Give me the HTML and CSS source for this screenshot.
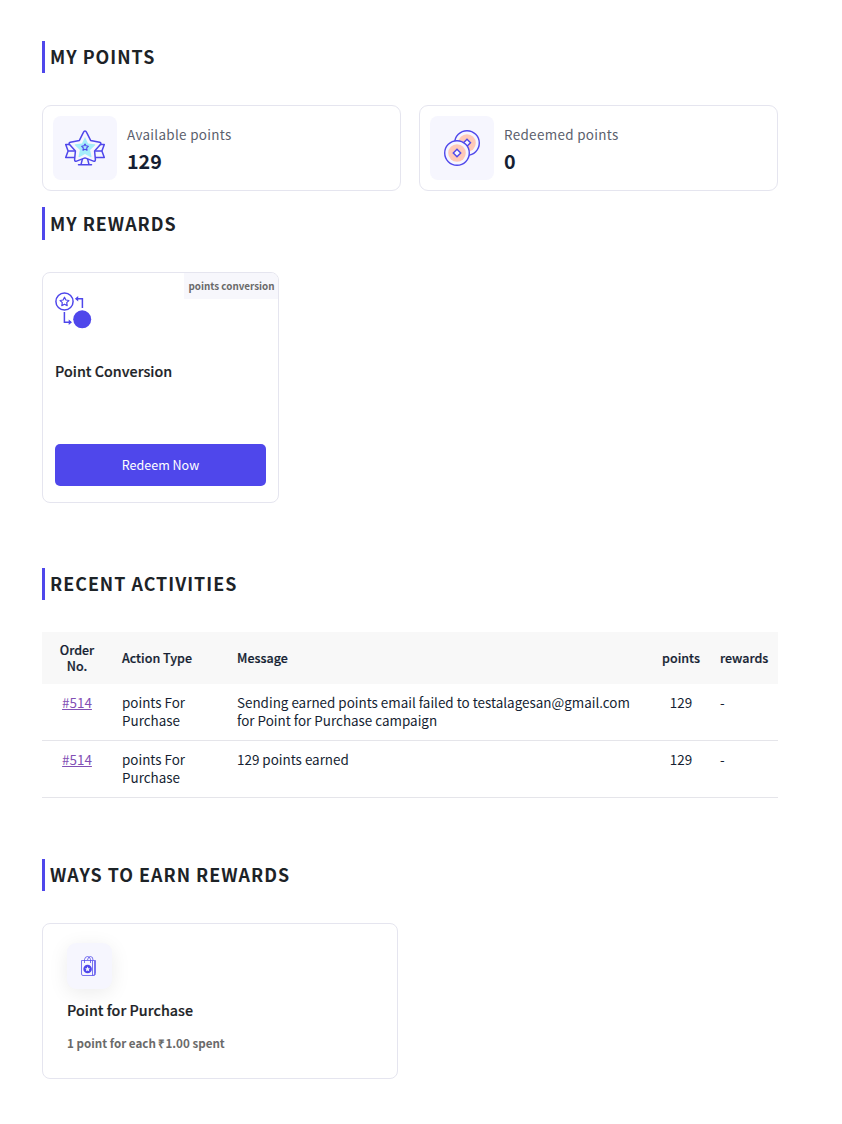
FILE: index.html
```html
<!DOCTYPE html>
<html lang="en">
<head>
<meta charset="utf-8">
<title>My Points</title>
<link rel="stylesheet" href="styles.css">
</head>
<body>
<main class="page">
  <section class="points">
    <h2 class="heading">MY POINTS</h2>
    <div class="stats">
      <div class="stat">
        <div class="stat-icon">
          <svg width="42" height="38" viewBox="0 -0.600 42 38" fill="none" stroke="#4f47eb" stroke-width="1.500" stroke-linejoin="round" stroke-linecap="round">
            <path d="M8 15H1.700l2.400 6.500L1.700 28H11M34 15h6.300l-2.400 6.500 2.400 6.500H31M4.100 21.500h6.400M37.900 21.500h-6.400"/>
            <path d="M18.500 29l-1.500 6M23.500 29l1.500 6M14.500 35.200h13"/>
            <path fill="#f6f6fe" d="M21 1.500q1 0 1.600 1.300l4 8 9 1.900q2.200.7.8 2.300l-5.800 6.500.8 8.500q0 2.300-2 1.500L21 28.300l-8.400 3.200q-2 .8-2-1.500l.8-8.500L5.600 15q-1.400-1.600.8-2.300l9-1.900 4-8Q20 1.500 21 1.500z"/>
            <path fill="#a5edfa" stroke="none" d="M21 7.300l3 6.500 6.800.9q1 .3.300 1l-5 4.600 1.400 6.600q0 1-.8.700L21 24.500l-5.700 3.100q-.8.300-.8-.700l1.400-6.600-5-4.600q-.7-.7.300-1l6.800-.9z"/>
            <path stroke-width="1.100" d="M21 14.400l1 1.800 2.300.5-1.600 1.600.3 2.300-2-.9-2 .9.300-2.300-1.600-1.600 2.300-.5z"/>
          </svg>
        </div>
        <div class="stat-text"><span class="stat-label">Available points</span><span class="stat-value">129</span></div>
      </div>
      <div class="stat">
        <div class="stat-icon">
          <svg width="38" height="38" viewBox="0 0 38 38" fill="#f6f6fe" stroke="#4f47eb" stroke-width="1.400">
            <circle cx="24" cy="14" r="12.300"/>
            <circle cx="24" cy="14" r="8.800" fill="#ffc9b8" stroke="none"/>
            <path d="M24 10.300l3.500 3.500-3.500 3.500-3.500-3.500z"/>
            <circle cx="14" cy="24" r="12.300"/>
            <circle cx="14" cy="24" r="8.800" fill="#ffc9b8" stroke="none"/>
            <path d="M14 20.300l3.700 3.700-3.700 3.700-3.700-3.700z"/>
          </svg>
        </div>
        <div class="stat-text"><span class="stat-label">Redeemed points</span><span class="stat-value">0</span></div>
      </div>
    </div>
  </section>

  <section class="rewards">
    <h2 class="heading heading-tall">MY REWARDS</h2>
    <div class="reward">
      <span class="tag">points conversion</span>
      <svg class="reward-icon" width="38" height="38" viewBox="0 0 38 38" fill="none" stroke="#4f47eb" stroke-width="1.500">
        <circle cx="9.500" cy="9.500" r="8.600"/>
        <path stroke-width="1.200" stroke-linejoin="round" d="M9.500 5.200l1.400 2.800 3 .5-2.200 2.100.5 3-2.700-1.400-2.700 1.400.5-3-2.200-2.100 3-.5z"/>
        <path d="M27.400 16V6.700H21M9.400 20v10.200H16"/>
        <path fill="#4f47eb" stroke="none" d="M23.200 4v5.400l-3.300-2.700zM13.700 27.500v5.400l3.300-2.700z"/>
        <circle cx="27.200" cy="27.300" r="9" fill="#4f47eb" stroke="none"/>
      </svg>
      <h3 class="reward-title">Point Conversion</h3>
      <button class="redeem" type="button">Redeem Now</button>
    </div>
  </section>

  <section class="activities">
    <h2 class="heading">RECENT ACTIVITIES</h2>
    <table class="table">
      <colgroup><col class="c-order"><col class="c-type"><col class="c-msg"><col class="c-points"><col class="c-rewards"></colgroup>
      <thead>
        <tr><th class="center">Order<br>No.</th><th>Action Type</th><th>Message</th><th class="center">points</th><th>rewards</th></tr>
      </thead>
      <tbody>
        <tr><td class="center"><a class="order" href="#">#514</a></td><td>points For<br>Purchase</td><td>Sending earned points email failed to testalagesan@gmail.com<br>for Point for Purchase campaign</td><td class="center">129</td><td>-</td></tr>
        <tr><td class="center"><a class="order" href="#">#514</a></td><td>points For<br>Purchase</td><td>129 points earned</td><td class="center">129</td><td>-</td></tr>
      </tbody>
    </table>
  </section>

  <section class="ways">
    <h2 class="heading">WAYS TO EARN REWARDS</h2>
    <div class="way">
      <div class="way-icon">
        <svg width="18" height="22" viewBox="0 0 18 22" fill="none" stroke="#4f47eb" stroke-width="1">
          <path stroke-opacity=".75" d="M2.500 5.500h13v13.500q0 1.500-1.500 1.500H4q-1.500 0-1.500-1.500zM13.500 5.500v15M15.500 5.500h1v13q0 2-2 2M5.500 8V4.500Q6 1.500 8.500 1.500T11.500 4.500V8M8.500 5Q9 1.500 11.500 1.500T14 5"/>
          <circle cx="8.600" cy="14" r="4.300" fill="#4f47eb" stroke="none"/>
          <path fill="#f6f6fe" stroke="none" d="M8.600 11.600l.8 1.600 1.700.2-1.200 1.200.3 1.700-1.600-.8-1.600.8.300-1.700-1.200-1.200 1.700-.2z"/>
        </svg>
      </div>
      <h3 class="way-title">Point for Purchase</h3>
      <p class="way-text">1 point for each ₹1.00 spent</p>
    </div>
  </section>
</main>
</body>
</html>
```
FILE: styles.css
```css
* { box-sizing: border-box; }
body { margin: 0; background: #fff; color: #1d2327; font-family: "Noto Sans CJK SC", "Open Sans", sans-serif; }
h2, h3, p { margin: 0; }
svg { display: block; }
.page { width: 778px; padding: 41px 0 0 42px; white-space: nowrap; }
.heading { height: 32px; border-left: 3px solid #4f47eb; padding-left: 5px; font-size: 17.87px; line-height: 30px; font-weight: 700; letter-spacing: 1px; margin-bottom: 32px; }
.heading-tall { height: 33px; line-height: 33px; }
.stats { display: grid; grid-template-columns: 359px 359px; gap: 18px; }
.stat { height: 86px; border: 1px solid #e5e5ef; border-radius: 9px; padding: 10px; display: flex; gap: 10px; }
.stat-icon { width: 64px; height: 64px; border-radius: 8px; background: #f6f6fe; display: flex; align-items: center; justify-content: center; }
.stat-text { display: flex; flex-direction: column; padding-top: 4px; }
.stat-label { font-size: 13.43px; line-height: 29px; letter-spacing: .33px; color: #5b5f6d; }
.stat-value { font-size: 19.7px; line-height: 23px; font-weight: 700; color: #161f33; }
.rewards { margin-top: 16px; }
.reward { position: relative; width: 237px; height: 231px; border: 1px solid #e5e5ef; border-radius: 8px; padding: 19px 12px 16px; display: flex; flex-direction: column; overflow: hidden; }
.tag { position: absolute; top: 0; right: 0; width: 94px; height: 26px; background: #f7f7fc; font-size: 9.83px; line-height: 26px; font-weight: 700; color: #6a6a6a; padding-right: 3.5px; text-align: right; }
.reward-title { margin-top: 30px; font-size: 14.3px; line-height: 22px; font-weight: 500; -webkit-text-stroke: .2px; letter-spacing: .03px; }
.redeem { margin-top: auto; height: 42px; border: 0; border-radius: 5px; background: #4f47eb; color: #fff; font: 400 12.53px/42px "Noto Sans CJK SC", sans-serif; padding: 0; }
.activities { margin-top: 65px; }
.table { width: 736px; border-collapse: separate; border-spacing: 0; table-layout: fixed; color: #161f33; }
.c-order { width: 70px; }
.c-type { width: 115px; }
.c-msg { width: 425px; }
.c-points { width: 58px; }
.c-rewards { width: 68px; }
th { height: 52px; padding: 0 10px; background: #f8f8f8; font-size: 12.53px; line-height: 16px; font-weight: 500; text-align: left; -webkit-text-stroke: .2px; }
td { height: 57px; padding: 9px 10px 0; border-bottom: 1px solid #e5e5ea; font-size: 13.43px; line-height: 18px; text-align: left; vertical-align: top; }
.center { text-align: center; }
.order { color: #8250b5; }
.ways { margin-top: 61px; }
.way { width: 356px; height: 156px; border: 1px solid #e5e5ef; border-radius: 8px; padding: 19px 24px; }
.way-icon { width: 45px; height: 46px; border-radius: 9px; background: #f6f6fe; box-shadow: 0 4px 20px rgba(0,0,0,.08); display: flex; align-items: center; justify-content: center; padding-right: 4px; }
.way-title { margin-top: 10px; font-size: 14.3px; line-height: 22px; font-weight: 500; -webkit-text-stroke: .2px; letter-spacing: .03px; }
.way-text { margin-top: 12px; font-size: 11.62px; line-height: 20px; font-weight: 700; color: #6a6a6a; }
```
